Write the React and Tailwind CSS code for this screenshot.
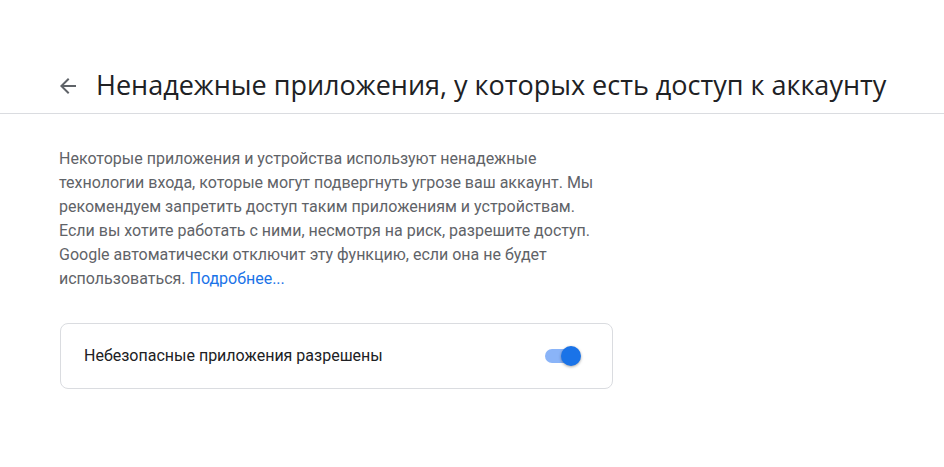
export default function App() {
    return (
        <div className="min-h-screen w-[944px] bg-white font-['Roboto',sans-serif]">
            <header className="flex h-[114px] items-end border-b border-[#dadce0]">
                <div className="flex h-[39px] items-start pl-[56px]">
                    <button className="mt-[0px] flex h-6 w-6 items-center justify-center text-[#5f6368]">
                        <svg width="24" height="24" viewBox="0 0 24 24" fill="currentColor">
                            <path d="M20 11H7.83l5.59-5.59L12 4l-8 8 8 8 1.41-1.41L7.83 13H20v-2z" />
                        </svg>
                    </button>
                    <h1 className="ml-[16px] -mt-[5px] font-['Open_Sans',sans-serif] text-[27px] leading-[32px] text-[#202124]">
                        Ненадежные приложения, у которых есть доступ к аккаунту
                    </h1>
                </div>
            </header>

            <main className="px-[59px] pt-[33px]">
                <p className="w-[553px] text-[16px] leading-[24px] text-[#5f6368]">
                    Некоторые приложения и устройства используют ненадежные технологии входа, которые могут подвергнуть угрозе ваш аккаунт. Мы рекомендуем запретить доступ таким приложениям и устройствам. Если вы хотите работать с ними, несмотря на риск, разрешите доступ. Google автоматически отключит эту функцию, если она не будет использоваться.{' '}
                    <a href="#" className="text-[#1a73e8]">Подробнее...</a>
                </p>

                <div className="mt-[32px] ml-[1px] flex h-[66px] w-[553px] items-center justify-between rounded-lg border border-[#dadce0] pl-[23px] pr-[33px]">
                    <span className="text-[16px] text-[#202124]">Небезопасные приложения разрешены</span>
                    <div className="relative h-[14px] w-[34px] rounded-full bg-[#8ab4f8]">
                        <div className="absolute -top-[3px] right-[-2px] h-5 w-5 rounded-full bg-[#1a73e8] shadow-[0_1px_3px_rgba(0,0,0,0.35)]" />
                    </div>
                </div>
            </main>
        </div>
    );
}
